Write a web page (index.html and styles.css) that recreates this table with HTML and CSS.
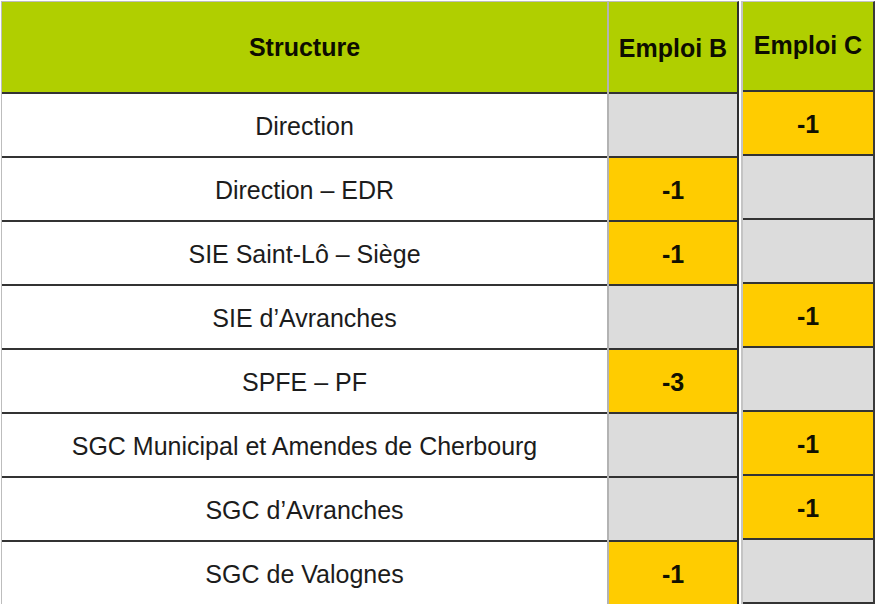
FILE: index.html
```html
<!DOCTYPE html>
<html lang="fr">
<head>
<meta charset="utf-8">
<title>Emplois</title>
<link rel="stylesheet" href="styles.css">
</head>
<body>
<div class="table">
  <div class="col col-structure">
    <div class="cell head">Structure</div>
    <div class="cell">Direction</div>
    <div class="cell">Direction – EDR</div>
    <div class="cell">SIE Saint-Lô – Siège</div>
    <div class="cell">SIE d’Avranches</div>
    <div class="cell">SPFE – PF</div>
    <div class="cell">SGC Municipal et Amendes de Cherbourg</div>
    <div class="cell">SGC d’Avranches</div>
    <div class="cell">SGC de Valognes</div>
  </div>
  <div class="col col-b">
    <div class="cell head head-b">Emploi B</div>
    <div class="cell empty"></div>
    <div class="cell val">-1</div>
    <div class="cell val">-1</div>
    <div class="cell empty"></div>
    <div class="cell val">-3</div>
    <div class="cell empty"></div>
    <div class="cell empty"></div>
    <div class="cell val">-1</div>
  </div>
  <div class="col col-c">
    <div class="cell head head-c">Emploi C</div>
    <div class="cell val">-1</div>
    <div class="cell empty"></div>
    <div class="cell empty"></div>
    <div class="cell val">-1</div>
    <div class="cell empty"></div>
    <div class="cell val">-1</div>
    <div class="cell val">-1</div>
    <div class="cell empty"></div>
  </div>
</div>
</body>
</html>
```
FILE: styles.css
```css
html, body {
  margin: 0;
  padding: 0;
  background: #ffffff;
  overflow: hidden;
}

body {
  font-family: "Liberation Sans", Arial, sans-serif;
  color: #1c1c1c;
  width: 876px;
  height: 604px;
}

.table {
  display: flex;
  align-items: flex-start;
  padding-left: 1px;
  padding-top: 1px;
}

.col {
  display: flex;
  flex-direction: column;
  border-top: 1px solid #bdbdbd;
}

.col-structure {
  width: 605px;
  border-left: 1px solid #bdbdbd;
  border-right: 2px solid #b3b3b3;
}

.col-b {
  width: 128px;
  border-right: 2px solid #2e2e2e;
}

.col-c {
  width: 130px;
  margin-left: 2px;
  border-left: 2px solid #c4c4c4;
  border-top-color: #c4c4c4;
  border-right: 2px solid #3a3a3a;
}

.cell {
  height: 60px;
  padding-top: 2px;
  border-bottom: 2px solid #333333;
  display: flex;
  align-items: center;
  justify-content: center;
  font-size: 25px;
  line-height: 1;
  flex-shrink: 0;
}

.head {
  height: 90px;
  padding-top: 0;
  background: #b0cf00;
  font-weight: bold;
  color: #0d0d00;
}

.head-b {
  padding-top: 3px;
  height: 87px;
}

.head-c {
  padding-top: 0;
  padding-bottom: 1px;
  height: 87px;
}

.empty {
  background: #dcdcdc;
}

.val {
  background: #ffcc00;
  font-weight: bold;
  color: #111100;
}
```
